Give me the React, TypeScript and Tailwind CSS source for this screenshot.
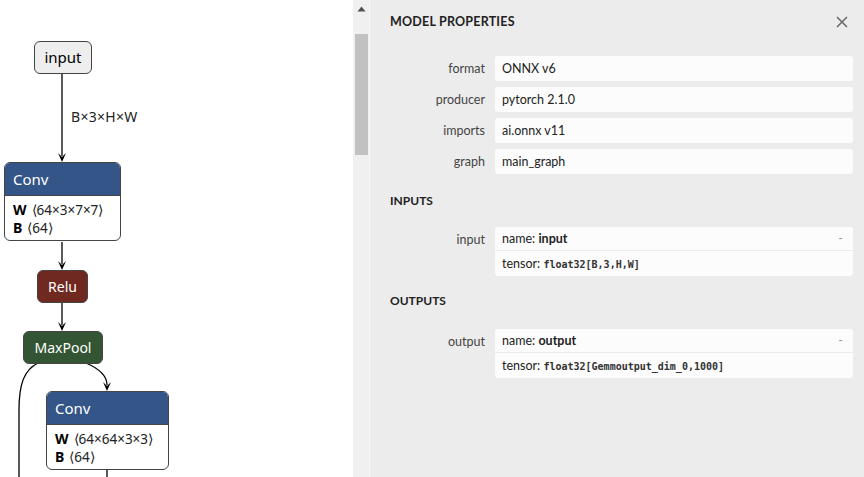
import React from "react";

const sans = { fontFamily: '"Noto Sans", "Open Sans", sans-serif' };
const panelFont = { fontFamily: 'Lato, "Noto Sans", sans-serif' };
const mono = { fontFamily: '"DejaVu Sans Mono", "Liberation Mono", monospace' };

function Arrow({ x, y }: { x: number; y: number }) {
  return <path d={`M ${x - 4} ${y - 9} L ${x} ${y} L ${x + 4} ${y - 9} L ${x} ${y - 5} Z`} fill="#000" />;
}

function LayerNode({ left, top, width, title, rows }: { left: number; top: number; width: number; title: string; rows: [string, string][] }) {
  return (
    <div
      className="absolute rounded-[6px] border border-[#444] bg-white overflow-hidden"
      style={{ left, top, width }}
    >
      <div className="h-[33px] bg-[#335588] border-b border-[#444] text-white text-[15px] leading-[33px] pl-[8px]">{title}</div>
      <div className="pt-[5px] pb-[3px] pl-[8px] text-[13px] leading-[18px] text-[#222]">
        {rows.map(([k, v]) => (
          <div key={k} className="flex gap-[5px]">
            <span className="font-bold text-black text-[14px]">{k}</span>
            <span className="text-[13.5px]">{v}</span>
          </div>
        ))}
      </div>
    </div>
  );
}

function Graph() {
  return (
    <div className="relative w-[353px] h-full bg-white overflow-hidden" style={sans}>
      <svg className="absolute inset-0" width="353" height="477">
        <g stroke="#000" strokeWidth="1.3" fill="none">
          <path d="M 62 73 L 62 156" />
          <path d="M 62 242 L 62 264" />
          <path d="M 62 302 L 62 325" />
          <path d="M 86 363 C 100 369, 107 377, 107 385" />
          <path d="M 38 363 C 24 370, 19 384, 19 410 L 19 477" />
          <path d="M 107 470 L 107 477" />
        </g>
        <Arrow x={62} y={162} />
        <Arrow x={62} y={270} />
        <Arrow x={62} y={331} />
        <Arrow x={107} y={391} />
      </svg>
      <div className="absolute left-[71px] top-[107px] text-[14px] leading-[20px] text-[#222] tracking-[0.3px]">B×3×H×W</div>

      <div className="absolute left-[34px] top-[41px] w-[58px] h-[33px] rounded-[6px] border border-[#444] bg-[#eeeeee] text-[15px] leading-[31px] text-center text-black">
        input
      </div>

      <LayerNode left={4} top={162} width={117} title="Conv" rows={[["W", "⟨64×3×7×7⟩"], ["B", "⟨64⟩"]]} />

      <div className="absolute left-[37px] top-[270px] w-[51px] h-[33px] rounded-[6px] border border-[#444] bg-[#702921] text-[14px] leading-[31px] text-center text-white">
        Relu
      </div>

      <div className="absolute left-[23px] top-[331px] w-[80px] h-[33px] rounded-[6px] border border-[#444] bg-[#335533] text-[14px] leading-[31px] text-center text-white">
        MaxPool
      </div>

      <LayerNode left={46} top={391} width={123} title="Conv" rows={[["W", "⟨64×64×3×3⟩"], ["B", "⟨64⟩"]]} />
    </div>
  );
}

function Scrollbar() {
  return (
    <div className="relative w-[16px] h-full bg-[#f0f0f0]">
      <svg className="absolute left-[4px] top-[6px]" width="9" height="6">
        <path d="M 0.5 5.5 L 4.5 0.5 L 8.5 5.5 Z" fill="#505050" />
      </svg>
      <div className="absolute left-[2px] top-[34px] w-[13px] h-[121px] bg-[#c1c1c1]" />
    </div>
  );
}

function Row({ label, children }: { label: string; children: React.ReactNode }) {
  return (
    <div className="flex items-start gap-[10px]">
      <div className="w-[95px] shrink-0 text-right text-[12.5px] leading-[25px] text-[#444]">{label}</div>
      <div className="flex-1 rounded-[3px] bg-[#fcfcfc] text-[12.5px] text-[#222]">{children}</div>
    </div>
  );
}

function Argument({ label, name, tensor }: { label: string; name: string; tensor: string }) {
  return (
    <Row label={label}>
      <div className="h-[24px] leading-[24px] pl-[7px] pr-[10px] flex justify-between border-b border-[#ececec]">
        <span>
          name: <span className="font-bold">{name}</span>
        </span>
        <span className="text-[#999]">-</span>
      </div>
      <div className="h-[25px] leading-[25px] pl-[7px]">
        tensor: <span className="text-[10px] font-bold text-[#333]" style={mono}>{tensor}</span>
      </div>
    </Row>
  );
}

function Panel() {
  const props: [string, string][] = [
    ["format", "ONNX v6"],
    ["producer", "pytorch 2.1.0"],
    ["imports", "ai.onnx v11"],
    ["graph", "main_graph"],
  ];
  return (
    <div className="flex-1 h-full bg-[#ececec] border-l border-[#f6f6f6] pl-[20px] pr-[11px]" style={panelFont}>
      <div className="flex items-center justify-between pt-[14px] h-[29px]">
        <span className="text-[12.5px] leading-[16px] font-bold tracking-[0.2px] text-[#222]">MODEL PROPERTIES</span>
        <svg width="12" height="12" className="mr-[5px]" viewBox="0 0 12 12">
          <path d="M 1 1 L 11 11 M 11 1 L 1 11" stroke="#666" strokeWidth="1.5" />
        </svg>
      </div>
      <div className="mt-[27px] flex flex-col gap-[6px]">
        {props.map(([k, v]) => (
          <Row key={k} label={k}>
            <div className="h-[25px] leading-[25px] pl-[7px]">{v}</div>
          </Row>
        ))}
      </div>
      <div className="mt-[19px] text-[12px] leading-[16px] font-bold text-[#222]">INPUTS</div>
      <div className="mt-[18px]">
        <Argument label="input" name="input" tensor="float32[B,3,H,W]" />
      </div>
      <div className="mt-[17px] text-[12px] leading-[16px] font-bold text-[#222]">OUTPUTS</div>
      <div className="mt-[20px]">
        <Argument label="output" name="output" tensor="float32[Gemmoutput_dim_0,1000]" />
      </div>
    </div>
  );
}

export default function App() {
  return (
    <div className="flex w-[864px] h-[477px] overflow-hidden">
      <Graph />
      <Scrollbar />
      <Panel />
    </div>
  );
}
